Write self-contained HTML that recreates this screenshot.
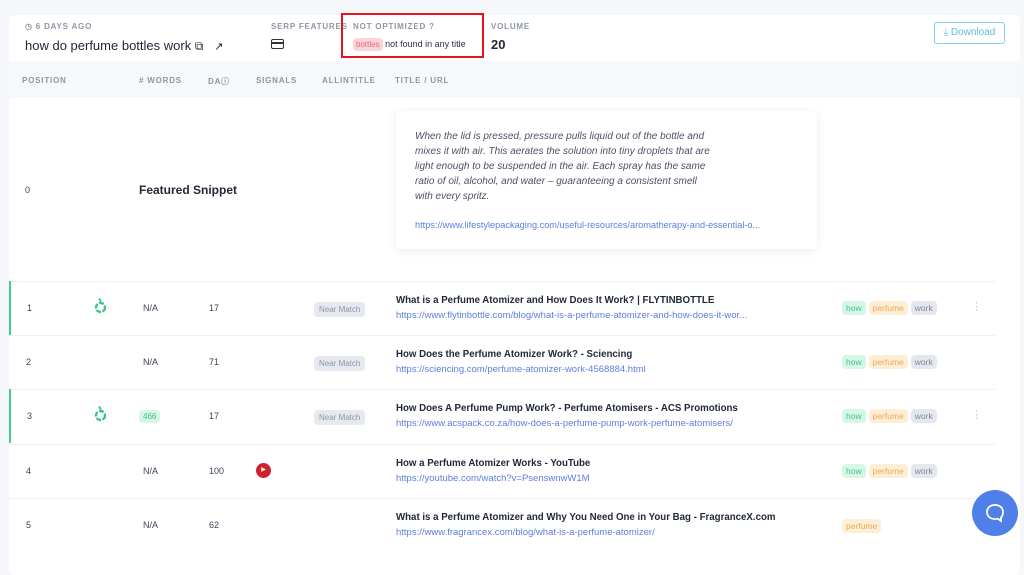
<!DOCTYPE html>
<html><head><meta charset="utf-8"><style>
*{box-sizing:border-box;margin:0;padding:0}
body{width:1024px;height:556px;overflow:hidden;background:#f5f7fb;font-family:"Liberation Sans",sans-serif;position:relative;color:#2b3445}
.a{position:absolute;white-space:nowrap}
.card{position:absolute;left:9px;top:15px;width:1011px;height:560px;background:#fff;border-radius:6px}
.lbl{font-size:8px;font-weight:bold;letter-spacing:.8px;color:#8e96a6}
.th{background:#f7f8fb;position:absolute;left:9px;top:61px;width:1011px;height:37px}
.row{position:absolute;left:9px;width:986px;height:54px;border-top:1px solid #eef0f4}
.n{font-size:9px;color:#3a4254}
.t{font-size:9.7px;font-weight:bold;color:#222a3a}
.u{font-size:9.5px;color:#5b7fe0}
.pill{display:inline-block;font-size:8.5px;padding:2px 4px;border-radius:4px;margin-right:3px}
.g{background:#d6f7e6;color:#3ec38a}.o{background:#fdeed6;color:#f2a756}.w{background:#e4e7ee;color:#7e8698}
.nm{font-size:8px;background:#e6e9ef;color:#8e96a6;padding:3px 5px;border-radius:4px}
.bar{position:absolute;left:9px;width:2px;height:54px;background:#3ed08c}
.dots{font-size:11px;color:#c4cad6}
</style></head><body>
<div class="card"></div>
<div class="a lbl" style="left:25px;top:22px">◷ 6 DAYS AGO</div>
<div class="a" style="left:25px;top:38px;font-size:13px;color:#1f2636">how do perfume bottles work <span style="font-size:12px">⧉</span> &nbsp;&nbsp;<span style="font-size:11px">↗</span></div>
<div class="a lbl" style="left:271px;top:22px">SERP FEATURES</div>
<div class="a" style="left:271px;top:39px;width:13px;height:10px;border:1.5px solid #333;border-radius:2px"></div>
<div class="a" style="left:272px;top:42px;width:11px;height:1.5px;background:#333"></div>
<div class="a" style="left:341px;top:13px;width:143px;height:45px;border:2.5px solid #e0151e"></div>
<div class="a lbl" style="left:353px;top:22px">NOT OPTIMIZED ?</div>
<div class="a" style="left:353px;top:39px;font-size:9px;color:#2b3445"><span style="background:#fbd4da;color:#e06a7a;padding:2px 3px;border-radius:4px;font-size:8px">bottles</span> not found in any title</div>
<div class="a lbl" style="left:491px;top:22px">VOLUME</div>
<div class="a" style="left:491px;top:37px;font-size:13px;font-weight:bold;color:#1f2636">20</div>
<div class="a" style="left:934px;top:22px;width:71px;height:22px;border:1px solid #7fd0ea;border-radius:3px;color:#5cbde0;font-size:10px;text-align:center;line-height:20px">⤓ Download</div>
<div class="th"></div>
<div class="a lbl" style="left:22px;top:76px">POSITION</div>
<div class="a lbl" style="left:139px;top:76px"># WORDS</div>
<div class="a lbl" style="left:208px;top:76px">DAⓘ</div>
<div class="a lbl" style="left:256px;top:76px">SIGNALS</div>
<div class="a lbl" style="left:322px;top:76px">ALLINTITLE</div>
<div class="a lbl" style="left:395px;top:76px">TITLE / URL</div>
<div class="a n" style="left:25px;top:185px">0</div>
<div class="a" style="left:139px;top:183px;font-size:12px;font-weight:bold;color:#222a3a">Featured Snippet</div>
<div class="a" style="left:396px;top:111px;width:421px;height:138px;background:#fff;border-radius:5px;box-shadow:0 2px 10px rgba(0,0,0,.08)"></div>
<div class="a" style="left:415px;top:129px;font-size:10px;font-style:italic;color:#4a5264;line-height:15px;white-space:normal;width:300px">When the lid is pressed, pressure pulls liquid out of the bottle and mixes it with air. This aerates the solution into tiny droplets that are light enough to be suspended in the air. Each spray has the same ratio of oil, alcohol, and water – guaranteeing a consistent smell with every spritz.</div>
<div class="a u" style="left:415px;top:220px;font-size:9.2px">https://www.lifestylepackaging.com/useful-resources/aromatherapy-and-essential-o...</div>

<div class="row" style="top:281px"></div><div class="bar" style="top:281px"></div>
<div class="a n" style="left:27px;top:303px">1</div>
<svg class="a" style="left:94px;top:297px" width="13" height="17" viewBox="0 0 13 17"><circle cx="6.5" cy="10.5" r="4.5" fill="none" stroke="#3ec38a" stroke-width="2.4" stroke-dasharray="5 1.5"/><path d="M5 1.5 L7 4.5" stroke="#3ec38a" stroke-width="2"/></svg>
<div class="a n" style="left:143px;top:303px">N/A</div><div class="a n" style="left:209px;top:303px">17</div>
<div class="a nm" style="left:314px;top:302px">Near Match</div>
<div class="a t" style="left:396px;top:295px">What is a Perfume Atomizer and How Does It Work? | FLYTINBOTTLE</div>
<div class="a u" style="left:396px;top:310px">https://www.flytinbottle.com/blog/what-is-a-perfume-atomizer-and-how-does-it-wor...</div>
<div class="a" style="left:842px;top:298px"><span class="pill g">how</span><span class="pill o">perfume</span><span class="pill w">work</span></div>
<div class="a dots" style="left:971px;top:300px">⋮</div>

<div class="row" style="top:335px"></div>
<div class="a n" style="left:26px;top:357px">2</div>
<div class="a n" style="left:143px;top:357px">N/A</div><div class="a n" style="left:209px;top:357px">71</div>
<div class="a nm" style="left:314px;top:356px">Near Match</div>
<div class="a t" style="left:396px;top:349px">How Does the Perfume Atomizer Work? - Sciencing</div>
<div class="a u" style="left:396px;top:364px">https://sciencing.com/perfume-atomizer-work-4568884.html</div>
<div class="a" style="left:842px;top:352px"><span class="pill g">how</span><span class="pill o">perfume</span><span class="pill w">work</span></div>

<div class="row" style="top:389px"></div><div class="bar" style="top:389px"></div>
<div class="a n" style="left:27px;top:411px">3</div>
<svg class="a" style="left:94px;top:405px" width="13" height="17" viewBox="0 0 13 17"><circle cx="6.5" cy="10.5" r="4.5" fill="none" stroke="#3ec38a" stroke-width="2.4" stroke-dasharray="5 1.5"/><path d="M5 1.5 L7 4.5" stroke="#3ec38a" stroke-width="2"/></svg>
<div class="a" style="left:139px;top:410px;font-size:8px;background:#d6f7e6;color:#3ec38a;padding:2px 4px;border-radius:4px">466</div>
<div class="a n" style="left:209px;top:411px">17</div>
<div class="a nm" style="left:314px;top:410px">Near Match</div>
<div class="a t" style="left:396px;top:403px">How Does A Perfume Pump Work? - Perfume Atomisers - ACS Promotions</div>
<div class="a u" style="left:396px;top:418px">https://www.acspack.co.za/how-does-a-perfume-pump-work-perfume-atomisers/</div>
<div class="a" style="left:842px;top:406px"><span class="pill g">how</span><span class="pill o">perfume</span><span class="pill w">work</span></div>
<div class="a dots" style="left:971px;top:408px">⋮</div>

<div class="row" style="top:444px"></div>
<div class="a n" style="left:26px;top:466px">4</div>
<div class="a n" style="left:143px;top:466px">N/A</div><div class="a n" style="left:209px;top:466px">100</div>
<div class="a" style="left:256px;top:463px;width:15px;height:15px;border-radius:50%;background:#d0222a;color:#fff;font-size:6px;text-align:center;line-height:15px">▶</div>
<div class="a t" style="left:396px;top:458px">How a Perfume Atomizer Works - YouTube</div>
<div class="a u" style="left:396px;top:473px">https://youtube.com/watch?v=PsenswnwW1M</div>
<div class="a" style="left:842px;top:461px"><span class="pill g">how</span><span class="pill o">perfume</span><span class="pill w">work</span></div>

<div class="row" style="top:498px"></div>
<div class="a n" style="left:26px;top:520px">5</div>
<div class="a n" style="left:143px;top:520px">N/A</div><div class="a n" style="left:209px;top:520px">62</div>
<div class="a t" style="left:396px;top:512px">What is a Perfume Atomizer and Why You Need One in Your Bag - FragranceX.com</div>
<div class="a u" style="left:396px;top:527px">https://www.fragrancex.com/blog/what-is-a-perfume-atomizer/</div>
<div class="a" style="left:842px;top:516px"><span class="pill o">perfume</span></div>
<div class="a" style="left:972px;top:490px;width:46px;height:46px;border-radius:50%;background:#4f7fe8"></div>
<svg class="a" style="left:984px;top:502px" width="22" height="22" viewBox="0 0 22 22"><path d="M11 3C6 3 3 6 3 10s3 7 8 7c1 0 2 0 3-.3L17 19v-3.5c1.3-1.3 2-3 2-5.5 0-4-3-7-8-7z" fill="none" stroke="#fff" stroke-width="1.8"/></svg>
</body></html>
